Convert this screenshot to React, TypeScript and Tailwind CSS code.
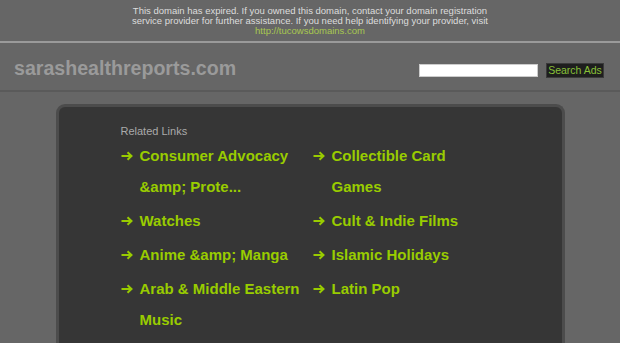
import React from "react";

const col1: string[][] = [
  ["Consumer Advocacy", "&amp; Prote..."],
  ["Watches"],
  ["Anime &amp; Manga"],
  ["Arab & Middle Eastern", "Music"],
];
const col2: string[][] = [
  ["Collectible Card", "Games"],
  ["Cult & Indie Films"],
  ["Islamic Holidays"],
  ["Latin Pop"],
];

function Arrow() {
  return (
    <svg width="12" height="10" viewBox="0 0 12 10" className="mt-[11px] shrink-0">
      <path d="M0.5 5H10M6.5 1.2L10.5 5L6.5 8.8" stroke="#99cc00" strokeWidth="2" fill="none" />
    </svg>
  );
}

function Column({ items }: { items: string[][] }) {
  return (
    <ul className="w-[192px] flex flex-col gap-[3px]">
      {items.map((lines, i) => (
        <li key={i} className="flex gap-[7px]">
          <Arrow />
          <div className="flex flex-col">
            {lines.map((l, j) => (
              <span key={j} className="text-[15px] font-bold leading-[31px] text-[#99cc00] whitespace-nowrap">
                {l}
              </span>
            ))}
          </div>
        </li>
      ))}
    </ul>
  );
}

export default function App() {
  return (
    <div className="w-[620px] h-[343px] overflow-hidden bg-[#666666] font-['Liberation_Sans',Arial,sans-serif]">
      <div className="h-[41px] pt-[6px] text-center text-[9.5px] leading-[10px] text-[#dddddd]">
        <p>This domain has expired. If you owned this domain, contact your domain registration</p>
        <p>service provider for further assistance. If you need help identifying your provider, visit</p>
        <p className="text-[#a8c850]">http://tucowsdomains.com</p>
      </div>
      <div className="h-[2px] bg-[#9a9a9a]" />
      <div className="h-[47px] flex items-center justify-between pl-[14px] pr-[16px]">
        <div className="text-[19.6px] font-bold text-[#9a9a9a] mt-[4px]">sarashealthreports.com</div>
        <div className="flex items-center gap-[8px] mt-[8px]">
          <div className="w-[119px] h-[13px] bg-white border border-[#cccccc]" />
          <div className="w-[58px] h-[15px] bg-[#1e1e1e] border border-[#3a3a3a] text-[10.5px] leading-[13px] text-center text-[#88c038] whitespace-nowrap">
            Search Ads
          </div>
        </div>
      </div>
      <div className="h-[2px] bg-[#5a5a5a]" />
      <div className="pt-[12px] flex justify-center">
        <div className="w-[509px] h-[260px] rounded-t-[9px] border-[3px] border-b-0 border-[#4c4c4c] bg-[#363636] pl-[62px] pt-[17px]">
          <div className="text-[11px] leading-[14px] text-[#aaaaaa] mb-[2px]">Related Links</div>
          <div className="flex">
            <Column items={col1} />
            <Column items={col2} />
          </div>
        </div>
      </div>
    </div>
  );
}
